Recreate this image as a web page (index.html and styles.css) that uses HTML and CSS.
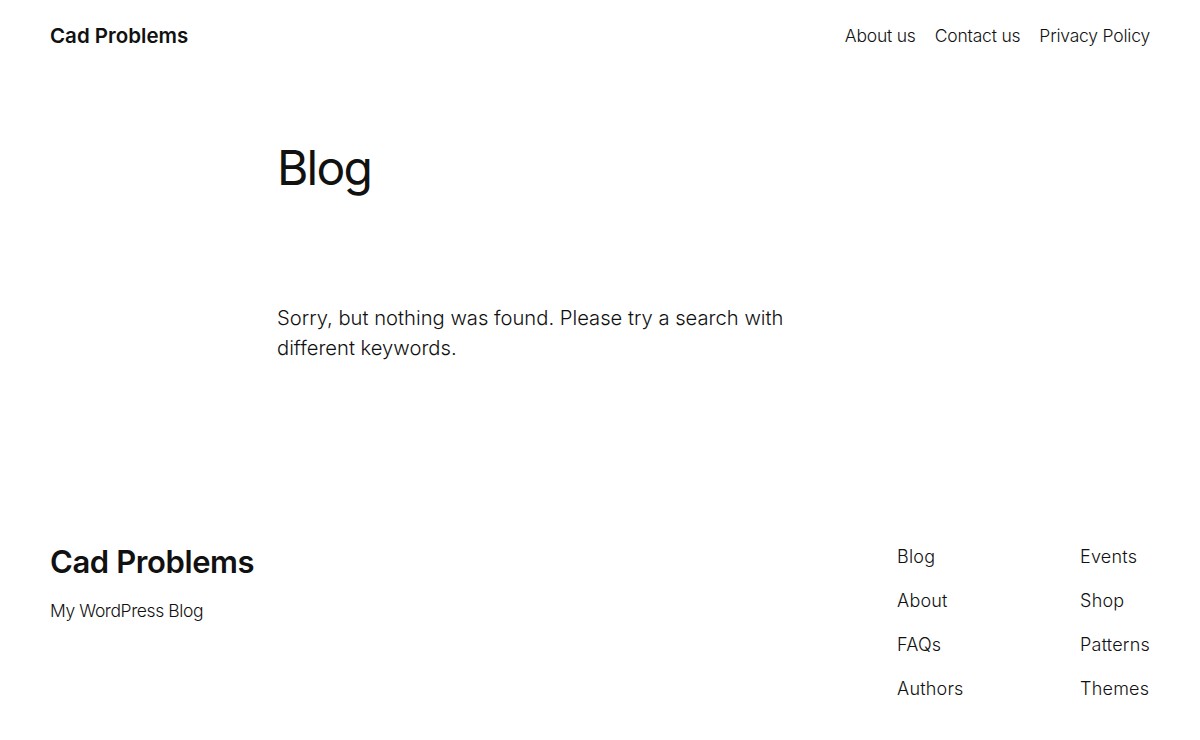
FILE: index.html
```html
<!DOCTYPE html>
<html lang="en">
<head>
<meta charset="utf-8">
<title>Blog – Cad Problems</title>
<link rel="stylesheet" href="styles.css">
</head>
<body>
<header class="site-header">
  <a class="site-title" href="#">Cad Problems</a>
  <nav class="top-nav">
    <a href="#">About us</a>
    <a href="#">Contact us</a>
    <a href="#">Privacy Policy</a>
  </nav>
</header>
<main class="main">
  <h1 class="page-title">Blog</h1>
  <p class="no-results">Sorry, but nothing was found. Please try a search with different keywords.</p>
</main>
<footer class="site-footer">
  <div class="footer-brand">
    <a class="footer-title" href="#">Cad Problems</a>
    <p class="tagline">My WordPress Blog</p>
  </div>
  <div class="footer-navs">
    <nav class="footer-col">
      <a href="#">Blog</a>
      <a href="#">About</a>
      <a href="#">FAQs</a>
      <a href="#">Authors</a>
    </nav>
    <nav class="footer-col">
      <a href="#">Events</a>
      <a href="#">Shop</a>
      <a href="#">Patterns</a>
      <a href="#">Themes</a>
    </nav>
  </div>
</footer>
</body>
</html>
```

FILE: styles.css
```css
* { box-sizing: border-box; }
html, body { margin: 0; padding: 0; background: #ffffff; }
body {
  font-family: Inter, "Noto Sans", sans-serif;
  font-weight: 300;
  color: #111111;
  width: 1200px;
  height: 740px;
  overflow: hidden;
}
a { color: #111111; text-decoration: none; }

.site-header {
  display: flex;
  justify-content: space-between;
  align-items: center;
  padding: 22px 50px 0 50px;
  height: 48px;
}
.site-title {
  font-size: 20.5px;
  font-weight: 600;
  letter-spacing: 0;
}
.top-nav {
  display: flex;
  gap: 19px;
  font-size: 17.5px;
  letter-spacing: -0.2px;
}

.main {
  width: 646px;
  margin: 0 auto;
  padding-top: 78px;
}
.page-title {
  margin: 0;
  font-size: 48px;
  font-weight: 400;
  letter-spacing: -1.8px;
  line-height: 84px;
}
.no-results {
  margin: 93px 0 0 0;
  font-size: 20.2px;
  line-height: 30px;
  letter-spacing: 0;
  width: 540px;
}

.site-footer {
  display: flex;
  justify-content: space-between;
  padding: 0 50px;
  margin-top: 179px;
}
.footer-title {
  display: block;
  font-size: 31px;
  font-weight: 600;
  letter-spacing: -0.4px;
  line-height: 40px;
}
.tagline {
  margin: 18px 0 0 0;
  font-size: 17.5px;
  letter-spacing: -0.4px;
}
.footer-navs {
  display: flex;
  padding-top: 2px;
}
.footer-col {
  display: flex;
  flex-direction: column;
  gap: 18px;
  font-size: 18px;
  line-height: 26px;
  letter-spacing: 0.2px;
}
.footer-col:first-child { width: 183px; }
```
